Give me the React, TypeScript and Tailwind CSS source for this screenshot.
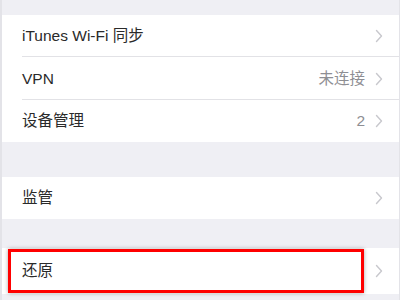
import React from "react";

const font = { fontFamily: '"Liberation Sans", "Noto Sans CJK SC", sans-serif' };

function Chevron() {
  return (
    <svg width="8" height="14" viewBox="0 0 8 14" className="shrink-0">
      <polyline points="1.5,1.5 6.5,7 1.5,12.5" fill="none" stroke="#c8c8cd" strokeWidth="1.4" strokeLinecap="round" strokeLinejoin="round" />
    </svg>
  );
}

function Row({ label, value, h, sep }: { label: string; value?: string; h: string; sep?: boolean }) {
  return (
    <div className={`relative flex items-center pl-[20px] pr-[16px] ${h}`}>
      <span className="flex-1 text-[15.5px] text-[#2a2a2a]">{label}</span>
      {value && <span className="mr-[10px] text-[15.5px] text-[#8e8e93]">{value}</span>}
      <Chevron />
      {sep && <div className="absolute bottom-0 left-[20px] right-0 h-px bg-[#e2e2e6]" />}
    </div>
  );
}

export default function App() {
  return (
    <div style={font} className="w-[400px] h-[300px] overflow-hidden bg-[#efeff4] border-l-2 border-r border-[#e3e3e8] flex flex-col">
      <div className="h-[15px] shrink-0" />
      <div className="bg-white shrink-0">
        <Row label="iTunes Wi-Fi 同步" h="h-[42px]" sep />
        <Row label="VPN" value="未连接" h="h-[43px]" sep />
        <Row label="设备管理" value="2" h="h-[42px]" />
      </div>
      <div className="h-[35px] shrink-0" />
      <div className="bg-white shrink-0">
        <Row label="监管" h="h-[42px]" />
      </div>
      <div className="h-[29px] shrink-0" />
      <div className="relative bg-white shrink-0">
        <Row label="还原" h="h-[46px]" />
        <div className="absolute left-[6px] top-[1px] w-[356px] h-[44px] border-[3px] border-[#ff0000] shadow-[0_0_4px_rgba(0,0,0,0.35)]" />
      </div>
    </div>
  );
}
